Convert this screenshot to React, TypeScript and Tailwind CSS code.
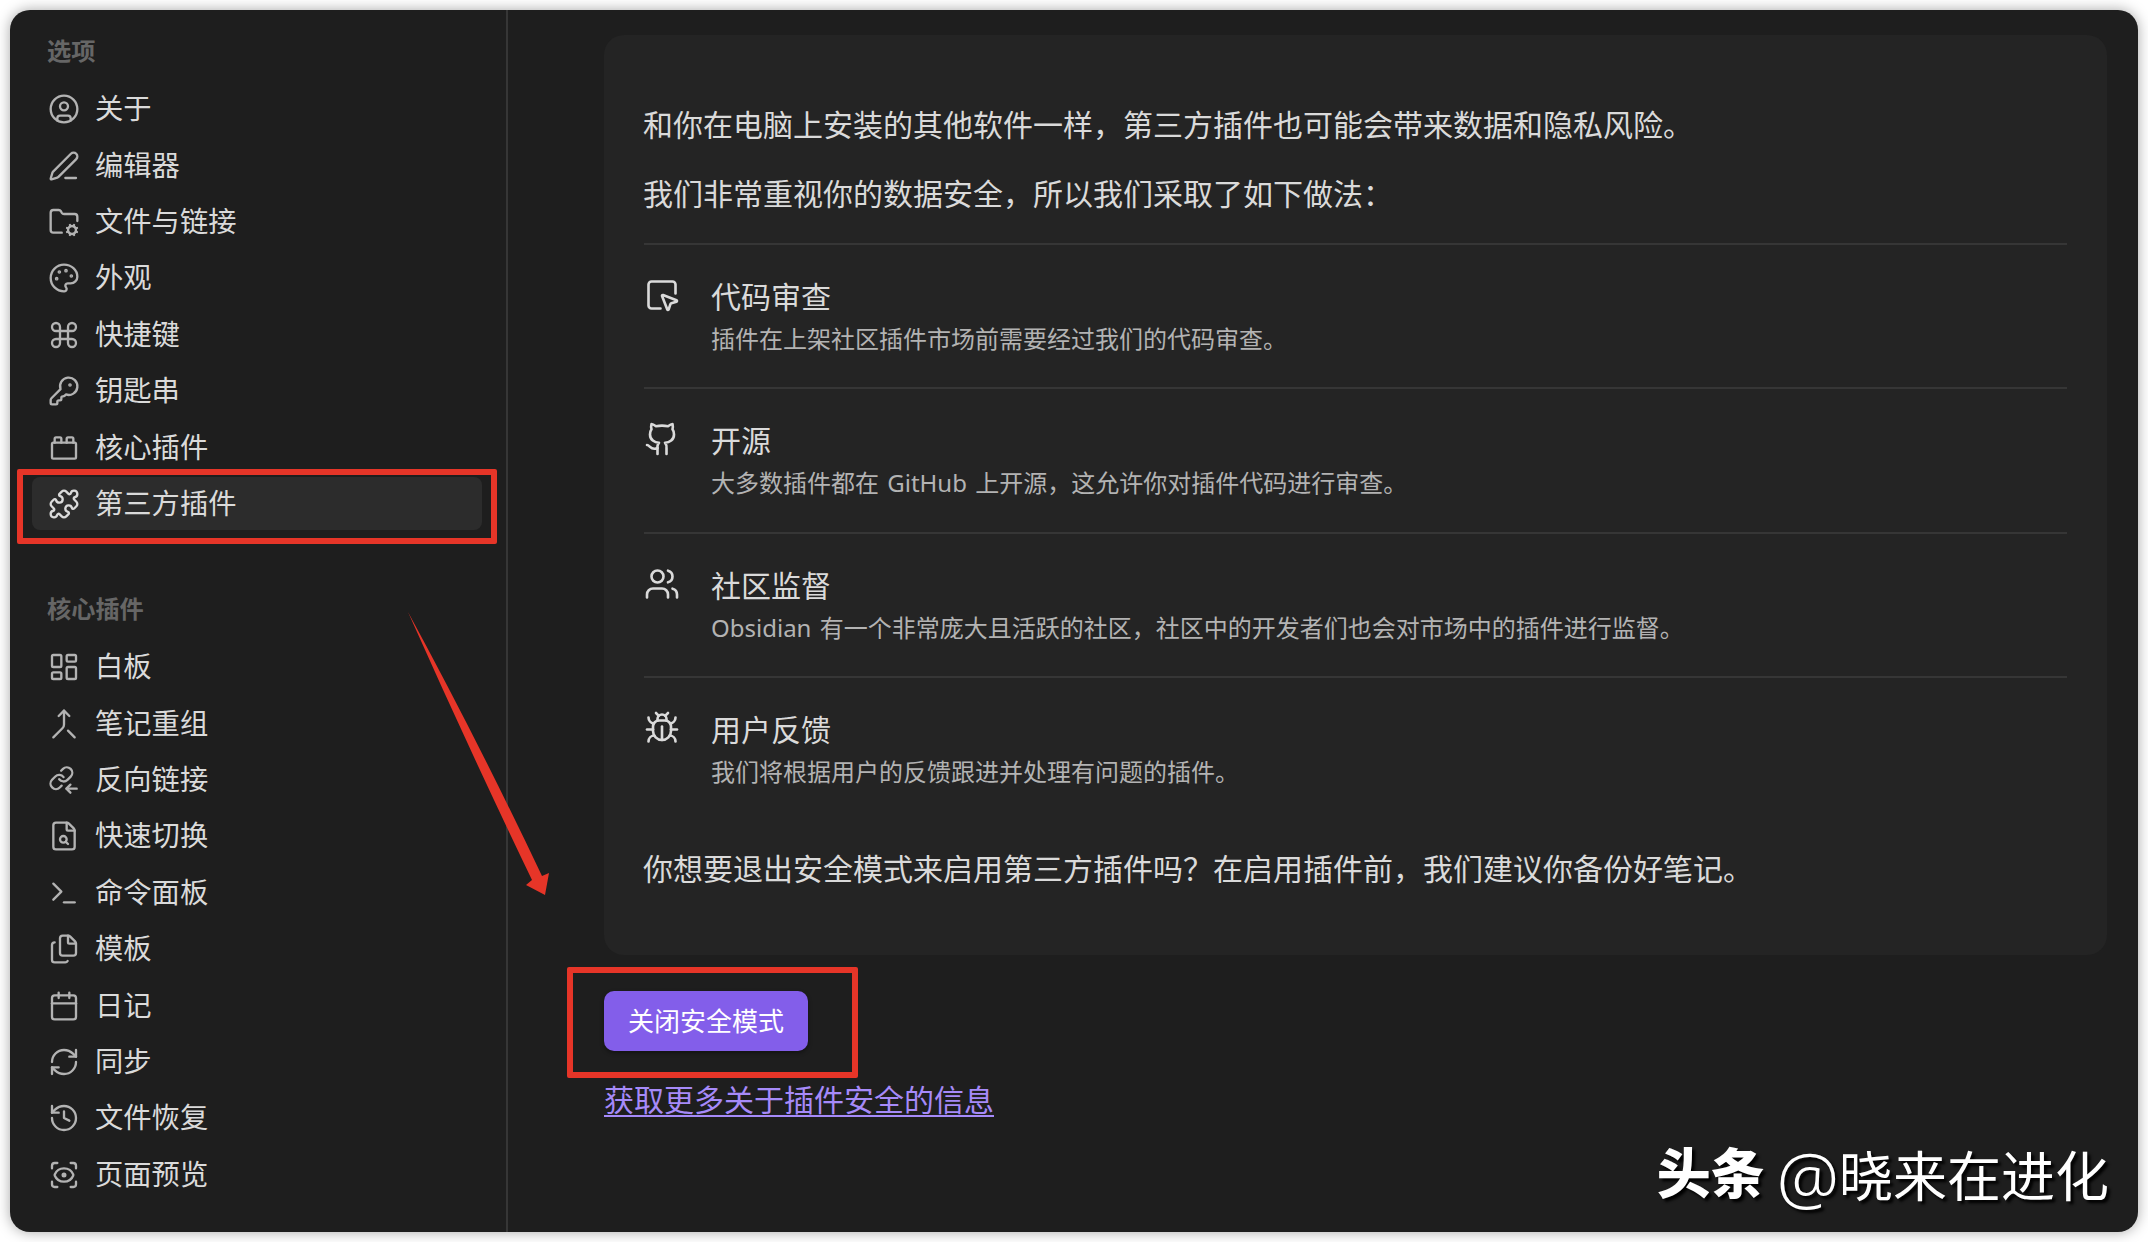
import type { ReactNode } from 'react'
import {
  Bug,
  Calendar,
  CircleUser,
  Command,
  FileSearch,
  Files,
  FolderCog,
  Github,
  History,
  KeyRound,
  LayoutDashboard,
  Merge,
  Palette,
  PenLine,
  Puzzle,
  RefreshCw,
  ScanEye,
  SquareMousePointer,
  Terminal,
  ToyBrick,
  Users,
  type LucideIcon,
} from 'lucide-react'

interface NavItem {
  label: string
  icon: LucideIcon | typeof BacklinkIcon
  active?: boolean
}

function BacklinkIcon({ className }: { className?: string; size?: number; strokeWidth?: number }) {
  return (
    <svg
      className={className}
      width="32"
      height="32"
      viewBox="0 0 24 24"
      fill="none"
      stroke="currentColor"
      strokeWidth="1.75"
      strokeLinecap="round"
      strokeLinejoin="round"
    >
      <g transform="translate(0.2 0.8) scale(0.82)" strokeWidth="2.13">
        <path d="M10 13a5 5 0 0 0 7.54.54l3-3a5 5 0 0 0-7.07-7.07l-1.72 1.71" />
        <path d="M14 11a5 5 0 0 0-7.54-.54l-3 3a5 5 0 0 0 7.07 7.07l1.710-1.710" />
      </g>
      <path d="M21.500 18.500h-7.500" />
      <path d="m16.800 15.500-3 3 3 3" />
    </svg>
  )
}

const options: NavItem[] = [
  { label: '关于', icon: CircleUser },
  { label: '编辑器', icon: PenLine },
  { label: '文件与链接', icon: FolderCog },
  { label: '外观', icon: Palette },
  { label: '快捷键', icon: Command },
  { label: '钥匙串', icon: KeyRound },
  { label: '核心插件', icon: ToyBrick },
  { label: '第三方插件', icon: Puzzle, active: true },
]

const corePlugins: NavItem[] = [
  { label: '白板', icon: LayoutDashboard },
  { label: '笔记重组', icon: Merge },
  { label: '反向链接', icon: BacklinkIcon },
  { label: '快速切换', icon: FileSearch },
  { label: '命令面板', icon: Terminal },
  { label: '模板', icon: Files },
  { label: '日记', icon: Calendar },
  { label: '同步', icon: RefreshCw },
  { label: '文件恢复', icon: History },
  { label: '页面预览', icon: ScanEye },
]

const measures = [
  { icon: SquareMousePointer, title: '代码审查', text: '插件在上架社区插件市场前需要经过我们的代码审查。' },
  { icon: Github, title: '开源', text: '大多数插件都在 GitHub 上开源，这允许你对插件代码进行审查。' },
  { icon: Users, title: '社区监督', text: 'Obsidian 有一个非常庞大且活跃的社区，社区中的开发者们也会对市场中的插件进行监督。' },
  { icon: Bug, title: '用户反馈', text: '我们将根据用户的反馈跟进并处理有问题的插件。' },
]

function NavGroup({ title, items }: { title: string; items: NavItem[] }) {
  return (
    <div>
      <h2 className="h-[30px] px-[15px] text-[24.2px] leading-[30px] font-semibold text-[#666666]">{title}</h2>
      <ul className="mt-[15px]">
        {items.map(({ label, icon: Icon, active }) => (
          <li key={label} className="relative flex h-[56.4px] items-center">
            <div className={`flex h-[53px] w-full items-center gap-[15px] rounded-lg px-4 ${active ? 'bg-[#2c2c2c]' : ''}`}>
              <Icon size={32} strokeWidth={1.75} className={active ? 'text-[#dadada]' : 'text-[#b3b3b3]'} />
              <span className="pb-0.5 text-[28.3px] leading-[38px] text-[#dadada]">{label}</span>
            </div>
            {active && <Highlight className="-top-[7px] -left-[15px] h-[75px] w-[480px]" />}
          </li>
        ))}
      </ul>
    </div>
  )
}

function Highlight({ className }: { className: string }) {
  return <div className={`pointer-events-none absolute rounded-[2px] border-[6px] border-[#e63528] ${className}`} />
}

function Paragraph({ children }: { children: ReactNode }) {
  return <p className="-ml-px text-[30px] leading-[45px]">{children}</p>
}

export default function App() {
  return (
    <div className="h-[1242px] w-[2148px] overflow-hidden bg-white px-[10px] pt-[10px] font-['Noto_Sans','Noto_Sans_CJK_SC',sans-serif]">
      <div className="relative flex h-[1222px] w-[2128px] rounded-[20px] bg-[#1e1e1e] text-[#dadada] shadow-[0_0_14px_rgba(0,0,0,0.35)]">
        {/* Sidebar */}
        <nav className="flex w-[498px] shrink-0 flex-col gap-[62px] border-r-2 border-[#363636] pt-[26px] pr-[24px] pl-[22px]">
          <NavGroup title="选项" items={options} />
          <NavGroup title="核心插件" items={corePlugins} />
        </nav>

        {/* Content */}
        <main className="flex flex-1 flex-col items-start pt-[25px] pl-24">
          <section className="h-[920px] w-[1503px] rounded-[20px] bg-[#242424] px-10 pt-[67px]">
            <Paragraph>和你在电脑上安装的其他软件一样，第三方插件也可能会带来数据和隐私风险。</Paragraph>
            <div className="mt-6">
              <Paragraph>我们非常重视你的数据安全，所以我们采取了如下做法：</Paragraph>
            </div>
            <div className="mt-[27px]">
              {measures.map(({ icon: Icon, title, text }) => (
                <div key={title} className="flex h-[144.400px] gap-[31px] border-t-2 border-[#363636] pt-[31px]">
                  <Icon size={36} strokeWidth={1.75} className="mt-px shrink-0" />
                  <div>
                    <h3 className="text-[30px] leading-[42px]">{title}</h3>
                    <p className="mt-px text-[24px] leading-[40px] text-[#b3b3b3] [word-spacing:2px]">{text}</p>
                  </div>
                </div>
              ))}
            </div>
            <div className="mt-[25px]">
              <Paragraph>你想要退出安全模式来启用第三方插件吗？在启用插件前，我们建议你备份好笔记。</Paragraph>
            </div>
          </section>
          <div className="relative mt-9">
            <button className="h-[60px] w-[204px] rounded-[10px] bg-[#835eea] text-[26px] text-white shadow-[0_2px_4px_rgba(0,0,0,0.4)]">
              关闭安全模式
            </button>
            <Highlight className="-top-[24px] -left-[37px] h-[111px] w-[291px]" />
          </div>
          <a className="mt-[26px] text-[30px] leading-[45px] text-[#a68af9] underline decoration-2 underline-offset-4" href="#">
            获取更多关于插件安全的信息
          </a>
        </main>

        {/* Pointer arrow */}
        <svg className="pointer-events-none absolute top-[600px] left-[395px]" width="150" height="290" fill="#e63528">
          <path d="M3 2 Q72 129 137 266 L144 263 L140 285 L121 275 L127 270 Q64 139 3 2 Z" />
        </svg>

        {/* Watermark */}
        <div className="absolute right-[29px] bottom-[14px] flex h-[84px] items-center gap-[12px] leading-[80px] text-white [text-shadow:3px_3px_3px_#000]">
          <span className="pb-[6px] text-[54px] font-black">头条</span>
          <span className="flex items-center text-[54px]">
            <span className="text-[70px] font-light">@</span>晓来在进化
          </span>
        </div>
      </div>
    </div>
  )
}
